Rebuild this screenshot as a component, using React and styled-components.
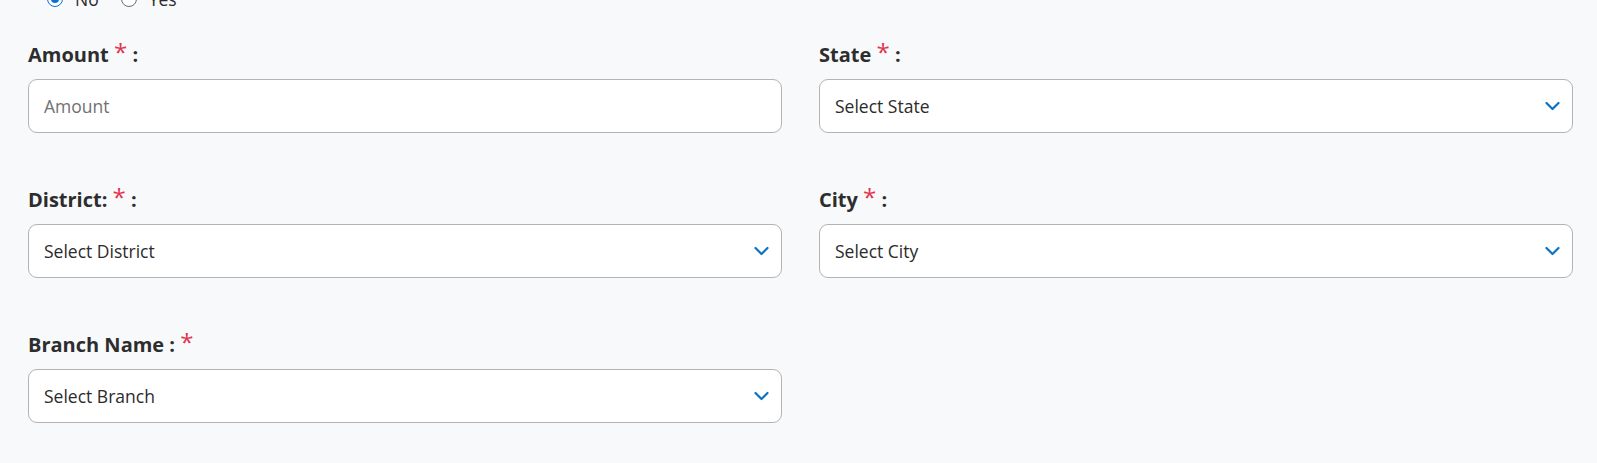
import React from "react";
import styled, { createGlobalStyle } from "styled-components";

const Global = createGlobalStyle`
  html, body { margin: 0; padding: 0; background: #f8f9fb; }
  body { font-family: "Open Sans", "Noto Sans", sans-serif; color: #2b2b2b; overflow: hidden; }
`;

const Page = styled.div`
  padding: 0 24px 40px 28px;
`;

const RadioRow = styled.div`
  display: flex;
  align-items: center;
  gap: 22px;
  padding-left: 19px;
  margin-top: -16px;
  height: 30px;
  margin-bottom: 27px;
`;

const RadioOption = styled.label`
  display: flex;
  align-items: center;
  gap: 12px;
  font-size: 17.5px;
  line-height: 30px;
  color: #2b2b2b;
`;

const RadioDot = styled.span`
  width: 16px;
  height: 16px;
  border-radius: 50%;
  box-sizing: border-box;
  border: 1.5px solid ${(p) => (p.$checked ? "#0b6fd6" : "#6b6b6b")};
  background: #fff;
  display: flex;
  align-items: center;
  justify-content: center;
  &::after {
    content: "";
    width: 8px;
    height: 8px;
    border-radius: 50%;
    background: ${(p) => (p.$checked ? "#0b6fd6" : "transparent")};
  }
`;

const Grid = styled.div`
  display: grid;
  grid-template-columns: 754px 754px;
  column-gap: 37px;
  row-gap: 53px;
`;

const Field = styled.div`
  display: flex;
  flex-direction: column;
  gap: 11px;
`;

const Label = styled.label`
  font-size: 20px;
  font-weight: 700;
  line-height: 27px;
  color: #2d2d2d;
  white-space: pre;
`;

const Req = styled.span`
  color: #e0354d;
  font-weight: 400;
  font-size: 24px;
  line-height: 0;
  position: relative;
  top: -1px;
`;

const Box = styled.div`
  height: 54px;
  box-sizing: border-box;
  border: 1px solid #b3b3b3;
  border-radius: 9px;
  background: #fff;
  display: flex;
  align-items: center;
  padding: 0 12px 0 15px;
  font-size: 17.5px;
  color: #2b2b2b;
`;

const Input = styled.input`
  border: none;
  outline: none;
  background: transparent;
  font: inherit;
  width: 100%;
  padding: 0;
  color: #2b2b2b;
  &::placeholder { color: #717171; opacity: 1; }
`;

const SelectText = styled.span`
  flex: 1;
`;

const Chevron = () => (
  <svg width="15" height="10" viewBox="0 0 15 10" fill="none">
    <path d="M1.5 2 L7.5 8 L13.5 2" stroke="#0a73c4" strokeWidth="2.2" strokeLinecap="round" strokeLinejoin="round" />
  </svg>
);

const Select = ({ text }) => (
  <Box>
    <SelectText>{text}</SelectText>
    <Chevron />
  </Box>
);

export default function App() {
  return (
    <Page>
      <Global />
      <RadioRow>
        <RadioOption><RadioDot $checked />No</RadioOption>
        <RadioOption><RadioDot />Yes</RadioOption>
      </RadioRow>
      <Grid>
        <Field>
          <Label>Amount <Req>*</Req> :</Label>
          <Box><Input placeholder="Amount" /></Box>
        </Field>
        <Field>
          <Label>State <Req>*</Req> :</Label>
          <Select text="Select State" />
        </Field>
        <Field>
          <Label>District: <Req>*</Req> :</Label>
          <Select text="Select District" />
        </Field>
        <Field>
          <Label>City <Req>*</Req> :</Label>
          <Select text="Select City" />
        </Field>
        <Field>
          <Label>Branch Name : <Req>*</Req></Label>
          <Select text="Select Branch" />
        </Field>
      </Grid>
    </Page>
  );
}
